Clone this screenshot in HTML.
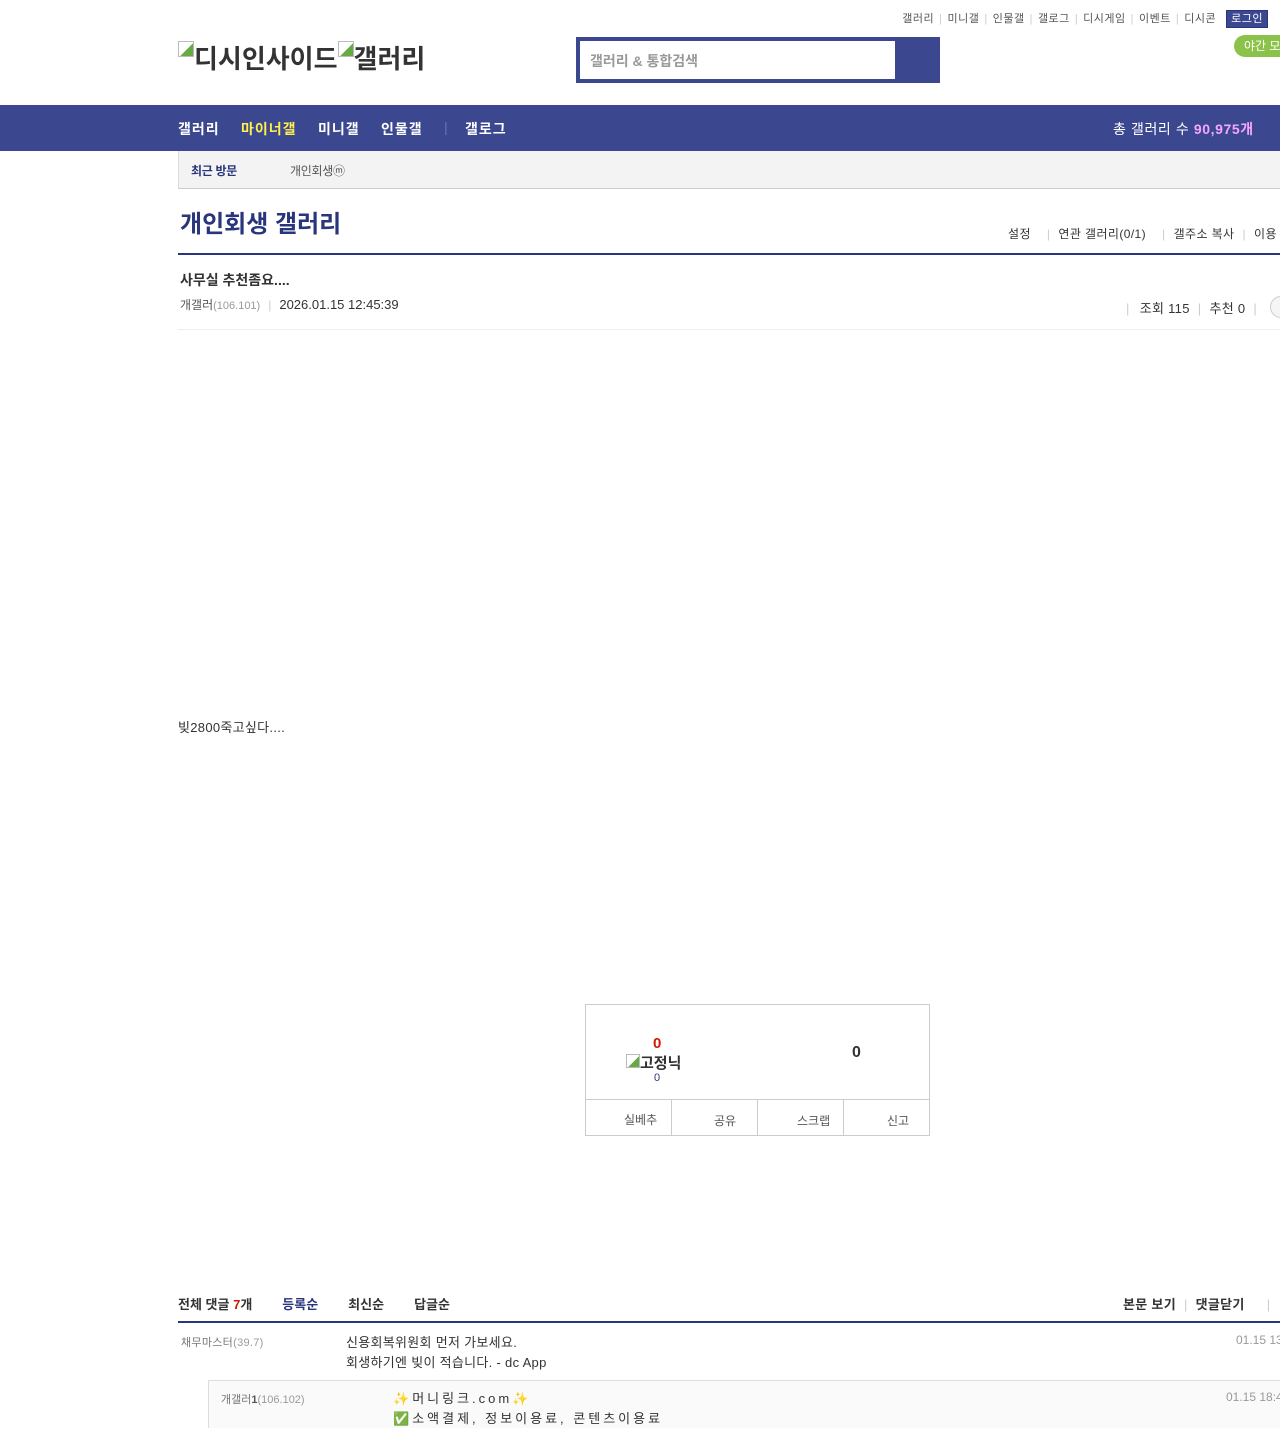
<!DOCTYPE html>
<html><head><meta charset="utf-8">
<style>
*{margin:0;padding:0;box-sizing:border-box}
body{width:1280px;height:1428px;overflow:hidden;background:#fff;font-family:"Liberation Sans","Noto Sans CJK KR",sans-serif;color:#333;position:relative}
.a{position:absolute;white-space:nowrap}
.top{top:10px;right:0;font-size:11px;color:#555;letter-spacing:0.5px}
.top span.sep{color:#ccc;margin:0 5px}
.login{background:#3b4890;color:#fff;padding:2px 4px;margin-left:10px;margin-right:12px;border:1px solid #29367c}
.night{left:1234px;top:35px;width:60px;height:22px;border-radius:11px;background:#8bc34a;color:#fff;font-size:12px;line-height:22px;padding-left:10px}
.logo{left:178px;top:39px;font-size:26px;font-weight:bold;color:#333;letter-spacing:0px}
.ic{display:inline-block;width:16px;height:16px;border:1px solid #bbb;background:linear-gradient(135deg,#fff 55%,#6a4 55%);vertical-align:top;margin-top:2px}
.srch{left:576px;top:37px;width:364px;height:46px;background:#3b4890}
.srch div{position:absolute;left:4px;top:4px;width:315px;height:38px;background:#fff;font-size:14px;color:#999;padding:10px 10px;font-weight:bold}
.nav{left:0;top:105px;width:1280px;height:46px;background:#3b4890}
.nav span{position:absolute;top:14px;font-size:14px;font-weight:bold;color:#fff;letter-spacing:1px}
.sub{left:178px;top:151px;width:1102px;height:38px;background:#f3f3f3;border-left:1px solid #ddd;border-bottom:1px solid #ccc}
.title{left:180px;top:204px;font-size:24px;font-weight:bold;color:#29367c;letter-spacing:0px}
.hl{left:178px;width:1102px;height:2px;background:#29367c}
.gray{color:#ccc;margin:0 8px}
</style></head><body>
<div class="a top">갤러리<span class="sep">|</span>미니갤<span class="sep">|</span>인물갤<span class="sep">|</span>갤로그<span class="sep">|</span>디시게임<span class="sep">|</span>이벤트<span class="sep">|</span>디시콘<span class="login">로그인</span></div>
<div class="a night">야간 모드</div>
<div class="a logo"><span class="ic"></span>디시인사이드<span class="ic"></span>갤러리</div>
<div class="a srch"><div>갤러리 &amp; 통합검색</div></div>
<div class="a nav">
<span style="left:178px">갤러리</span>
<span style="left:241px;color:#fff04a">마이너갤</span>
<span style="left:318px">미니갤</span>
<span style="left:381px">인물갤</span>
<span style="left:444px;color:#6a75b0;font-weight:normal">|</span>
<span style="left:465px">갤로그</span>
<span style="left:1113px;font-weight:normal;letter-spacing:0.6px">총 갤러리 수 <b style="color:#f7a6ff">90,975개</b></span>
</div>
<div class="a sub"><span class="a" style="left:12px;top:11px;font-size:12px;font-weight:bold;color:#29367c;letter-spacing:-0.3px">최근 방문</span><span class="a" style="left:111px;top:11px;font-size:12px;color:#555;letter-spacing:-0.3px">개인회생ⓜ</span></div>
<div class="a title">개인회생 갤러리</div>
<div class="a" style="left:1008px;top:225px;font-size:12px;color:#333;letter-spacing:0.4px">설정<span class="gray" style="margin-left:16px">|</span>연관 갤러리(0/1)<span class="gray" style="margin-left:16px">|</span>갤주소 복사<span class="gray">|</span>이용</div>
<div class="a hl" style="top:253px"></div>
<div class="a" style="left:180px;top:270px;font-size:14px;font-weight:bold;color:#333">사무실 추천좀요....</div>
<div class="a" style="left:180px;top:296px;font-size:12px;color:#555">개갤러<span style="font-size:11px;color:#999">(106.101)</span><span class="gray">|</span><span style="color:#333;font-size:13px">2026.01.15 12:45:39</span></div>
<div class="a" style="left:1126px;top:298px;font-size:13px;color:#333;letter-spacing:0.3px"><span class="gray" style="margin-left:0;margin-right:10px">|</span>조회 115<span class="gray">|</span>추천 0<span class="gray">|</span></div>
<div class="a" style="left:1270px;top:296px;width:22px;height:22px;border:1px solid #ccc;border-radius:11px;background:#f5f5f5"></div>
<div class="a" style="left:178px;top:329px;width:1102px;height:1px;background:#eee"></div>
<div class="a" style="left:178px;top:717px;font-size:13px;color:#333;letter-spacing:0.3px">빚2800죽고싶다....</div>
<div class="a" style="left:585px;top:1004px;width:345px;height:132px;border:1px solid #ccc">
<div class="a" style="left:67px;top:30px;font-size:15px;font-weight:bold;color:#d31900">0</div>
<div class="a" style="left:40px;top:47px;font-size:15px;font-weight:bold;color:#333"><span class="ic" style="width:14px;height:14px"></span>고정닉</div>
<div class="a" style="left:68px;top:67px;font-size:11px;color:#29367c">0</div>
<div class="a" style="left:266px;top:39px;font-size:16px;font-weight:bold;color:#333">0</div>
<div class="a" style="left:0;top:94px;width:343px;height:36px;border-top:1px solid #ccc;font-size:12px;color:#555">
<div class="a" style="left:0;top:0;width:86px;height:36px;border-right:1px solid #ccc;padding:11px 0 0 38px">실베추</div>
<div class="a" style="left:86px;top:0;width:86px;height:36px;border-right:1px solid #ccc;padding:12px 0 0 42px">공유</div>
<div class="a" style="left:172px;top:0;width:86px;height:36px;border-right:1px solid #ccc;padding:12px 0 0 39px">스크랩</div>
<div class="a" style="left:258px;top:0;width:86px;height:36px;padding:12px 0 0 43px">신고</div>
</div></div>
<div class="a" style="left:178px;top:1294px;font-size:13px;font-weight:bold;color:#333">전체 댓글 <span style="color:#d31900">7</span>개<span style="color:#29367c;margin-left:30px">등록순</span><span style="margin-left:30px">최신순</span><span style="margin-left:30px">답글순</span></div>
<div class="a" style="left:1123px;top:1294px;font-size:13px;font-weight:bold;color:#333;letter-spacing:0.3px">본문 보기<span class="gray" style="font-weight:normal">|</span>댓글닫기<span class="gray" style="font-weight:normal;margin-left:22px">|</span></div>
<div class="a hl" style="top:1321px"></div>
<div class="a" style="left:181px;top:1334px;font-size:11px;color:#777;letter-spacing:0.3px">채무마스터<span style="color:#999">(39.7)</span></div>
<div class="a" style="left:346px;top:1333px;font-size:13px;color:#333;line-height:20px;letter-spacing:0.3px">신용회복위원회 먼저 가보세요.<br>회생하기엔 빚이 적습니다. - dc App</div>
<div class="a" style="left:1236px;top:1333px;font-size:12px;color:#999">01.15 13:</div>
<div class="a" style="left:208px;top:1380px;width:1072px;height:48px;background:#fafafa;border-top:1px solid #ddd;border-left:1px solid #ddd"></div>
<div class="a" style="left:221px;top:1391px;font-size:11px;color:#777">개갤러<b style="color:#555">1</b><span style="color:#999">(106.102)</span></div>
<div class="a" style="left:393px;top:1389px;font-size:13px;color:#333;line-height:20px;letter-spacing:3px"><span style="color:#f5c518">✨</span>머니링크.com<span style="color:#f5c518">✨</span><br><span style="color:#4caf50">✅</span>소액결제, 정보이용료, 콘텐츠이용료</div>
<div class="a" style="left:1226px;top:1390px;font-size:12px;color:#999">01.15 18:4</div>
</body></html>
